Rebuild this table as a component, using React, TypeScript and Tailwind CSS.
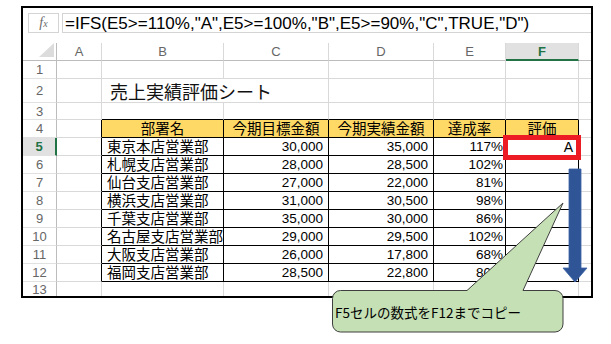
import React from "react";

const rows = [
  { n: 5, b: "東京本店営業部", c: "30,000", d: "35,000", e: "117%", f: "A" },
  { n: 6, b: "札幌支店営業部", c: "28,000", d: "28,500", e: "102%", f: "" },
  { n: 7, b: "仙台支店営業部", c: "27,000", d: "22,000", e: "81%", f: "" },
  { n: 8, b: "横浜支店営業部", c: "31,000", d: "30,500", e: "98%", f: "" },
  { n: 9, b: "千葉支店営業部", c: "35,000", d: "30,000", e: "86%", f: "" },
  { n: 10, b: "名古屋支店営業部", c: "29,000", d: "29,500", e: "102%", f: "" },
  { n: 11, b: "大阪支店営業部", c: "26,000", d: "17,800", e: "68%", f: "" },
  { n: 12, b: "福岡支店営業部", c: "28,500", d: "22,800", e: "80%", f: "" },
];

const jp = { fontFamily: "'Noto Sans CJK JP', 'Liberation Sans', sans-serif" };
const ui = { fontFamily: "'Liberation Sans', Arial, sans-serif" };

// plain sheet cell with light grid lines
function Cell({ className = "", children }: { className?: string; children?: React.ReactNode }) {
  return (
    <div className={`flex items-center overflow-hidden whitespace-nowrap leading-none border-r border-b border-[#d9d9d9] ${className}`}>
      {children}
    </div>
  );
}

function RowHead({ n, active = false, last = false }: { n: number; active?: boolean; last?: boolean }) {
  return (
    <div
      className={`flex items-center justify-center text-[13px] leading-none ${
        active ? "bg-[#e1e1e1] text-[#217346] font-bold border-r-2 border-r-[#217346]" : "bg-white text-[#666] border-r border-r-[#bcbcbc]"
      } ${last ? "" : "border-b border-b-[#e1e1e1]"}`}
      style={ui}
    >
      {n}
    </div>
  );
}

function ColHead({ label, active = false, last = false }: { label: string; active?: boolean; last?: boolean }) {
  return (
    <div
      className={`flex items-center justify-center text-[13px] leading-none ${
        active ? "bg-[#e1e1e1] text-[#217346] font-bold border-b-2 border-b-[#217346]" : "bg-white text-[#666] border-b border-b-[#bcbcbc]"
      } ${last ? "" : "border-r border-r-[#d9d9d9]"}`}
      style={ui}
    >
      {label}
    </div>
  );
}

export default function App() {
  return (
    <div className="relative w-[611px] h-[344px] bg-white overflow-hidden">
      <div className="ml-[21px] mt-[6px] w-[572px] h-[292px] border-2 border-black flex flex-col">
        {/* formula bar */}
        <div className="h-[35px] flex items-start pt-[5px] pl-[5px] gap-[3px]">
          <div className="w-[31px] h-[20px] border border-[#d4d4d4] flex items-center justify-center text-[#6b6b6b] italic leading-none" style={{ fontFamily: "'Liberation Serif', serif" }}>
            <span className="text-[14px]">f</span>
            <span className="text-[10px] mt-[2px]">x</span>
          </div>
          <div className="flex-1 h-[20px] border-y border-l border-[#d4d4d4] flex items-center pl-[2px] text-[17px] leading-none text-black" style={ui}>
            =IFS(E5&gt;=110%,"A",E5&gt;=100%,"B",E5&gt;=90%,"C",TRUE,"D")
          </div>
        </div>

        {/* sheet grid */}
        <div className="flex-1 grid grid-cols-[34px_45px_122px_105px_105px_72px_73px_1fr] grid-rows-[18px_18px_24px_17px_repeat(9,18px)_1fr]">
          {/* column headers */}
          <div className="flex items-end justify-end pb-[3px] pr-[2px] border-r border-b border-[#bcbcbc]">
            <svg width="15" height="14" viewBox="0 0 15 14">
              <path d="M15 0 L15 14 L0 14 Z" fill="#dcdcdc" />
            </svg>
          </div>
          <ColHead label="A" />
          <ColHead label="B" />
          <ColHead label="C" />
          <ColHead label="D" />
          <ColHead label="E" />
          <ColHead label="F" active />
          <ColHead label="" last />

          {/* row 1 */}
          <RowHead n={1} />
          <Cell />
          <Cell />
          <Cell />
          <Cell />
          <Cell />
          <Cell />
          <Cell className="border-r-0" />

          {/* row 2 */}
          <RowHead n={2} />
          <Cell />
          <Cell className="col-span-2 pl-[8px] text-[18px] text-[#111]">
            <span className="block leading-none" style={jp}>売上実績評価シート</span>
          </Cell>
          <Cell />
          <Cell />
          <Cell />
          <Cell className="border-r-0" />

          {/* row 3 */}
          <RowHead n={3} />
          <Cell />
          <Cell className="border-b-black" />
          <Cell className="border-b-black" />
          <Cell className="border-b-black" />
          <Cell className="border-b-black" />
          <Cell className="border-b-black" />
          <Cell className="border-r-0" />

          {/* row 4 table header */}
          <RowHead n={4} />
          <Cell className="border-r-black" />
          {["部署名", "今期目標金額", "今期実績金額", "達成率", "評価"].map((h) => (
            <Cell key={h} className="justify-center bg-[#ffd966] border-black text-[14.5px] text-black">
              <span className="block leading-none" style={jp}>{h}</span>
            </Cell>
          ))}
          <Cell className="border-r-0" />

          {rows.map((r) => (
            <React.Fragment key={r.n}>
              <RowHead n={r.n} active={r.n === 5} />
              <Cell className="border-r-black" />
              <Cell className="pl-[5px] border-black text-[14.5px] text-black">
                <span className="block leading-none" style={jp}>{r.b}</span>
              </Cell>
              <Cell className="justify-end pr-[5px] border-black text-[13.5px] text-black">
                <span className="block leading-none" style={ui}>{r.c}</span>
              </Cell>
              <Cell className="justify-end pr-[5px] border-black text-[13.5px] text-black">
                <span className="block leading-none" style={ui}>{r.d}</span>
              </Cell>
              <Cell className="justify-end pr-[2px] border-black text-[13.5px] text-black">
                <span className="block leading-none" style={ui}>{r.e}</span>
              </Cell>
              <Cell className="justify-end pr-[5px] border-black text-[14px] text-black">
                <span className="block leading-none" style={ui}>{r.f}</span>
              </Cell>
              <Cell className="border-r-0" />
            </React.Fragment>
          ))}

          {/* row 13 */}
          <RowHead n={13} last />
          <Cell className="border-b-0" />
          <Cell className="border-b-0" />
          <Cell className="border-b-0" />
          <Cell className="border-b-0" />
          <Cell className="border-b-0" />
          <Cell className="border-b-0" />
          <Cell className="border-r-0 border-b-0" />
        </div>
      </div>

      {/* red highlight on F5 */}
      <div className="absolute left-[503px] top-[135px] w-[78px] h-[25px] border-[5px] border-[#ed1c24]" />

      {/* fill-down arrow and callout */}
      <svg className="absolute left-0 top-0 pointer-events-none" width="611" height="344" viewBox="0 0 611 344">
        <path d="M569 169 H581 V268 H587 L575 282 L563 268 H569 Z" fill="#2f5597" stroke="#3a62a7" strokeWidth="0.8" />
        <path
          d="M340.5 290.5 H467 L563 203 L523 290.5 H555 A8 8 0 0 1 563 298.5 V324 A8 8 0 0 1 555 332 H340.5 A8 8 0 0 1 332.5 324 V298.5 A8 8 0 0 1 340.5 290.5 Z"
          fill="#c5e0b4"
          stroke="#3f3f3f"
          strokeWidth="1"
        />
      </svg>
      <div className="absolute left-[335px] top-[303px] text-[13.5px] leading-[18px] text-black" style={jp}>
        F5セルの数式をF12までコピー
      </div>
    </div>
  );
}
